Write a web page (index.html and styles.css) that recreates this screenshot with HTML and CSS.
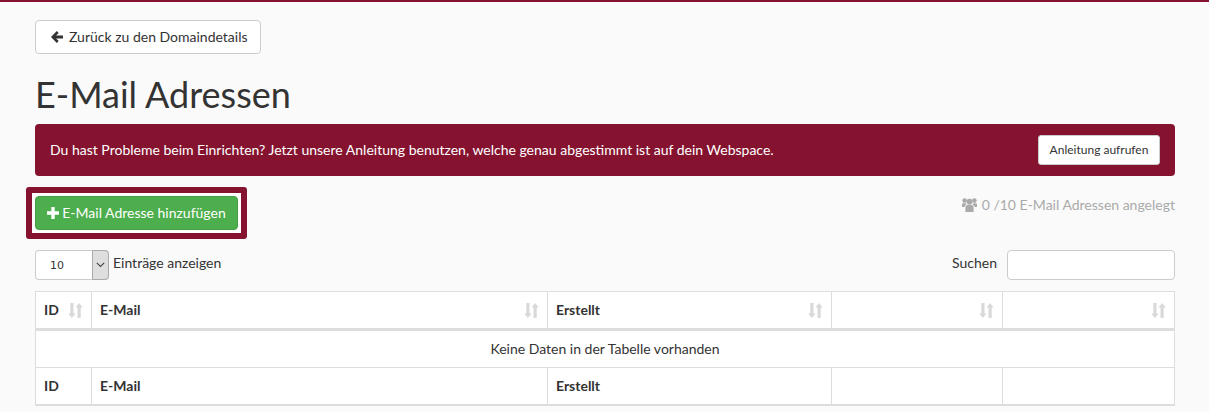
FILE: index.html
```html
<!DOCTYPE html>
<html lang="de">
<head>
<meta charset="utf-8">
<title>E-Mail Adressen</title>
<link rel="stylesheet" href="styles.css">
</head>
<body>
<svg class="sprite" width="0" height="0" aria-hidden="true">
  <symbol id="sort" viewBox="0 0 15 15"><path d="M2.300 0h3.200v10.500h2.100L3.900 15 .2 10.500h2.100z"/><path d="M9.500 15h3.200V4.500h2.100L11.100 0 7.400 4.500h2.100z"/></symbol>
</svg>
<main class="page">
  <a class="btn-back" href="#"><svg class="i-back" viewBox="0 0 12 12"><path d="M5.800 0l1.900 1.900-2.600 2.500H12v3.200H5.100l2.600 2.500L5.800 12 0 6z"/></svg>Zurück zu den Domaindetails</a>
  <h1>E-Mail Adressen</h1>
  <div class="banner">
    <span>Du hast Probleme beim Einrichten? Jetzt unsere Anleitung benutzen, welche genau abgestimmt ist auf dein Webspace.</span>
    <a class="btn-guide" href="#">Anleitung aufrufen</a>
  </div>
  <div class="actions">
    <div class="highlight"><a class="btn-add" href="#"><svg class="i-plus" viewBox="0 0 12 12"><path d="M4.300 0h3.400v4.300H12v3.400H7.700V12H4.300V7.700H0V4.300h4.300z"/></svg>E-Mail Adresse hinzufügen</a></div>
    <div class="count"><svg class="i-users" viewBox="0 0 15 14"><circle cx="7.500" cy="3.800" r="3"/><circle cx="2.600" cy="2.600" r="2.300"/><circle cx="12.400" cy="2.600" r="2.300"/><path d="M3.400 14V9.500C3.400 8 4.500 7 5.800 7h3.400c1.300 0 2.400 1 2.400 2.500V14z"/><path d="M0 9V6.500C0 5.700.7 5.200 1.500 5.200h2c.2.700.6 1.300 1.100 1.600C3.300 7.200 2.500 8.200 2.400 9H0zM15 9V6.500c0-.8-.7-1.300-1.500-1.300h-2c-.2.700-.6 1.300-1.100 1.600 1.300.4 2.100 1.400 2.200 2.200H15z"/></svg>0 /10 E-Mail Adressen angelegt</div>
  </div>
  <div class="controls">
    <div class="length">
      <div class="select"><span class="select-value">10</span><span class="select-arrow"><svg viewBox="0 0 9 6"><path d="M.8.8L4.500 4.500 8.200.8" fill="none" stroke="#444" stroke-width="1.100"/></svg></span></div>
      <span>Einträge anzeigen</span>
    </div>
    <label class="search">Suchen<input type="text" aria-label="Suchen"></label>
  </div>
  <table>
    <colgroup><col class="c1"><col class="c2"><col class="c3"><col class="c4"><col class="c5"></colgroup>
    <thead>
      <tr>
        <th><div class="th-in">ID<svg class="i-sort"><use href="#sort"/></svg></div></th>
        <th><div class="th-in">E-Mail<svg class="i-sort"><use href="#sort"/></svg></div></th>
        <th><div class="th-in">Erstellt<svg class="i-sort"><use href="#sort"/></svg></div></th>
        <th><div class="th-in"><span></span><svg class="i-sort"><use href="#sort"/></svg></div></th>
        <th><div class="th-in"><span></span><svg class="i-sort"><use href="#sort"/></svg></div></th>
      </tr>
    </thead>
    <tbody>
      <tr><td colspan="5" class="empty">Keine Daten in der Tabelle vorhanden</td></tr>
    </tbody>
    <tfoot>
      <tr><th>ID</th><th>E-Mail</th><th>Erstellt</th><th></th><th></th></tr>
    </tfoot>
  </table>
</main>
</body>
</html>
```
FILE: styles.css
```css
* { box-sizing: border-box; }
html, body { margin: 0; height: 412px; overflow: hidden; }
body {
  background: #fafafa;
  border-top: 2px solid #85132f;
  font-family: Lato, sans-serif;
  font-size: 14px;
  line-height: 20px;
  color: #333;
}
a { text-decoration: none; color: inherit; }
.sprite { position: absolute; }
.page { padding: 18px 34px 0 35px; }
.btn-back {
  display: inline-flex;
  align-items: center;
  height: 34px;
  width: 226px;
  padding: 0 12px;
  background: #fff;
  border: 1px solid #ccc;
  border-radius: 4px;
  color: #333;
}
.i-back { width: 12px; height: 12px; margin: 0 6px 0 3px; fill: #333; }
h1 {
  margin: 20px 0 10px;
  font-size: 36px;
  line-height: 40px;
  font-weight: 400;
  color: #333;
}
.banner {
  display: flex;
  justify-content: space-between;
  align-items: center;
  height: 52px;
  padding: 0 15px;
  background: #85132f;
  border-radius: 4px;
  color: #fff;
}
.btn-guide {
  display: block;
  width: 122px;
  height: 30px;
  line-height: 28px;
  text-align: center;
  background: #fff;
  border: 1px solid #ccc;
  border-radius: 3px;
  color: #333;
  font-size: 12px;
}
.actions {
  display: flex;
  justify-content: space-between;
  align-items: flex-start;
  margin: 11px 0 0 -9px;
}
.highlight {
  width: 221px;
  height: 52px;
  padding: 3px;
  background: #fff;
  border: 6px solid #85132f;
  border-radius: 3px;
}
.btn-add {
  display: flex;
  align-items: center;
  justify-content: center;
  height: 34px;
  background: #4cae4c;
  border: 1px solid #449d44;
  border-radius: 4px;
  color: #fff;
}
.i-plus { width: 12px; height: 12px; margin-right: 3px; fill: #fff; }
.count {
  display: flex;
  align-items: center;
  margin-top: 8px;
  color: #aaa;
}
.i-users { width: 15px; height: 14px; margin-right: 5px; fill: #aaa; }
.controls {
  display: flex;
  justify-content: space-between;
  align-items: flex-start;
  margin-top: 11px;
  height: 41px;
}
.length { display: flex; align-items: flex-start; gap: 4px; line-height: 26px; }
.select {
  display: flex;
  width: 74px;
  height: 30px;
  background: #fff;
  border: 1px solid #ccc;
  border-right: 0;
  border-radius: 4px;
}
.select-value {
  flex: 1;
  padding-left: 14px;
  font-family: "DejaVu Sans", sans-serif;
  font-size: 11px;
  line-height: 30px;
}
.select-arrow {
  display: flex;
  align-items: center;
  justify-content: center;
  width: 17px;
  height: 30px;
  margin-top: -1px;
  background: #dedede;
  border: 1px solid #aaa;
  border-radius: 0 4px 4px 0;
}
.select-arrow svg { width: 9px; height: 6px; }
.search { display: flex; align-items: flex-start; gap: 10px; line-height: 26px; }
.search input {
  width: 168px;
  height: 30px;
  background: #fff;
  border: 1px solid #ccc;
  border-radius: 4px;
}
table {
  width: 1140px;
  table-layout: fixed;
  border-collapse: separate;
  border-spacing: 0;
  background: #fff;
  border: 1px solid #ddd;
}
.c1 { width: 55px; }
.c2 { width: 456px; }
.c3 { width: 284px; }
.c4 { width: 171px; }
th, td { padding: 8px; text-align: left; border-left: 1px solid #ddd; }
th:first-child, td:first-child { border-left: 0; }
thead th { height: 38px; padding: 8px 8px 8px; border-bottom: 3px solid #ddd; font-weight: 700; }
.th-in { display: flex; justify-content: space-between; align-items: center; height: 20px; }
.i-sort { width: 15px; height: 15px; fill: #d9d9d9; }
.empty { height: 37px; text-align: center; border-bottom: 1px solid #ddd; padding: 8px; }
tfoot th { height: 36px; font-weight: 700; border-bottom: 1px solid #ddd; }
```
